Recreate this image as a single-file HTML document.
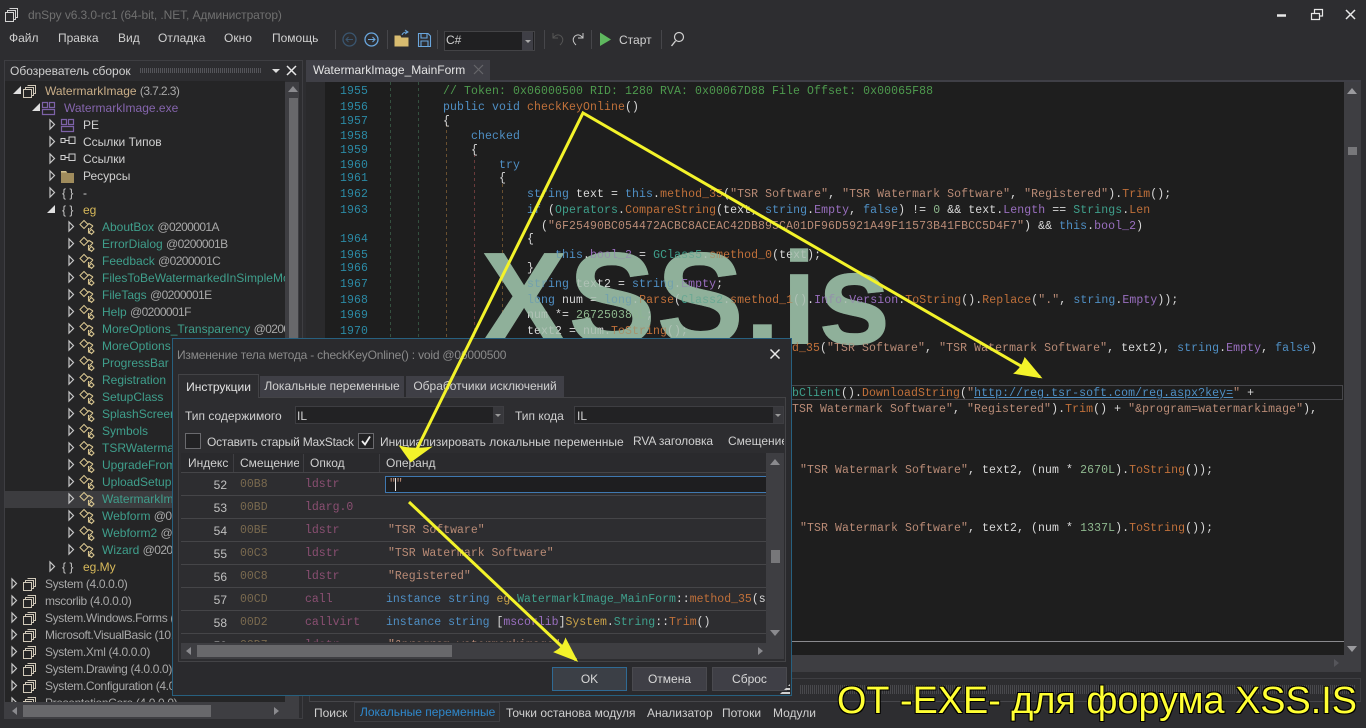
<!DOCTYPE html>
<html><head><meta charset="utf-8"><style>
html,body{margin:0;padding:0;width:1366px;height:728px;overflow:hidden;background:#2d2d30}
body{font-family:"Liberation Sans","Noto Sans CJK SC",sans-serif;font-size:12px;color:#d0d0d0;position:relative}
.a{position:absolute;white-space:nowrap}
.b{position:absolute}
#tree{position:absolute;left:5px;top:83px;width:280px;height:619px;overflow:hidden;background:#252526}
.r{position:relative;height:17px;line-height:17px;white-space:nowrap}
.r svg{position:absolute;left:0;top:0;width:110px;height:17px}
.r span{position:absolute;top:0}
.t{color:#3f9f8c}.g{color:#a8a8a8}
.r .g{letter-spacing:-.6px}
.r .l1.g{letter-spacing:-.35px}
.l1{left:40px}.l2{left:59px}.l3{left:78px}.l4{left:97px}
#code{position:absolute;left:0;top:2px;color:#d8d8d8}
#code div{position:absolute;white-space:pre;font-family:"Liberation Mono",monospace;font-size:11.5px;line-height:14px;letter-spacing:.1px}
.n{color:#2b8aa5}.k{color:#4f8fc4}.m{color:#c0703a}.s{color:#b98b76}.c{color:#4e9a4e}.y{color:#3fa08c}.d{color:#8fb98f}.u{color:#4f8fc4;text-decoration:underline}.p{color:#9a6fc0}
.row{position:absolute;left:181px;width:585px;height:22px;border-bottom:1px solid #454548;font-family:"Liberation Mono",monospace;font-size:11.5px;line-height:22px}
.row span{position:absolute;top:1px;white-space:pre}
.i{left:0;width:46px;text-align:right;color:#c0c0c0;font-family:"Liberation Sans",sans-serif;font-size:12px}
.o{left:59px;color:#7a6a4f}.q{left:124px;color:#8a4f72}.v{left:205px}
.btn{position:absolute;top:667px;height:22px;line-height:22px;text-align:center;background:#3f3f46;border:1px solid #4a4a4f;color:#d8d8d8;box-sizing:content-box}
.tab{position:absolute;top:376px;height:21px;line-height:21px;text-align:center;background:#3f3f46;color:#d0d0d0}
</style></head><body>
<svg width="0" height="0" style="position:absolute"><defs>
<g id="ao"><path d="M0 0L-8 8H0Z" fill="#e0e0e0"/></g>
<g id="ac"><path d="M0 0V9L4.500 4.500Z" fill="none" stroke="#c8c8c8" stroke-width="1.200"/></g>
<g id="asm"><path d="M4.500 .5H12.500V8.500H10M.5 4.500H8.500V12.500H.5ZM2.500 4.500V2.500H10.500V4.500M10.500 2.500V10.500H8.500" fill="none" stroke="#d0c8b8" stroke-width="1"/></g>
<g id="mod"><path d="M.5 .5H5.500V5.500H.5ZM7.500 .5H12.500V5.500H7.500ZM.5 7.500H12.500V12.500H.5Z" fill="none" stroke="#7d62a8" stroke-width="1.200"/></g>
<g id="ref"><path d="M0 2.500H4V6.500H0ZM8 1H14V7.500H8ZM4 4.500H8" fill="none" stroke="#d0d0d0" stroke-width="1"/></g>
<g id="fol"><path d="M0 1H5L6.500 3H13V13H0Z" fill="#a08c5c"/><path d="M0 1H5L6 2.500H0Z" fill="#d0c090"/></g>
<g id="cl"><path d="M0 4.500L4 .5L8 4.500L4 8.500ZM5.500 7L9 3.500L13 6M9.500 9.500L13 6M8.500 8V13L12 14M11.500 9.500L14 12L11.500 14.500L9 12Z" fill="none" stroke="#d6c38e" stroke-width="1.100"/></g>
</defs></svg>

<!-- title bar -->
<svg class="b" style="left:4px;top:8px" width="16" height="15"><path d="M5.500 .5H13.500V9.500H11M1.500 4.500H9.500V13.500H1.500ZM3.500 4.500V2.500H11.500V4.500M11.500 2.500V11.500H9.500" fill="none" stroke="#d4d4d4"/></svg>
<div class="a" style="left:28px;top:8px;color:#707070;font-size:12px;letter-spacing:-.09px">dnSpy v6.3.0-rc1 (64-bit, .NET, Администратор)</div>
<svg class="b" style="left:1270px;top:6px" width="92" height="16" fill="none" stroke="#e8e8e8"><path d="M7 9.500H16" stroke-width="2.500"/><path d="M41.500 7.500H49.500V13.500H41.500ZM44.500 7V3.500H52.500V10H50" stroke-width="1.200"/><path d="M76 4L85 13M85 4L76 13" stroke-width="1.500"/></svg>

<!-- menu -->
<div class="a" style="left:9px;top:31px">Файл</div>
<div class="a" style="left:58px;top:31px">Правка</div>
<div class="a" style="left:118px;top:31px">Вид</div>
<div class="a" style="left:158px;top:31px">Отладка</div>
<div class="a" style="left:224px;top:31px">Окно</div>
<div class="a" style="left:272px;top:31px">Помощь</div>
<svg class="b" style="left:330px;top:28px" width="360" height="24" fill="none">
<path d="M5.500 2V21M57.500 2V21M107.500 2V21M214.500 2V21M261.500 2V21M331.500 2V21" stroke="#46464a"/>
<circle cx="19.500" cy="11.500" r="6.500" stroke="#3a5670" stroke-width="1.300"/><path d="M23 11.500H16M18.500 9L16 11.500L18.500 14" stroke="#3a5670"/>
<circle cx="41.500" cy="11.500" r="6.500" stroke="#6aa7de" stroke-width="1.300"/><path d="M38 11.500H45M42.500 9L45 11.500L42.500 14" stroke="#6aa7de"/>
<path d="M65 8H70L71 10H78V18H65Z" fill="#d8bc70" stroke="#d8bc70"/><path d="M72 7Q73 4 77 4M75 2L78 4L75 6" stroke="#6aa7de"/>
<path d="M88.500 5.500H98L100.500 8V18.500H88.500ZM91 5.500V10H97V5.500M91 18.500V13H98V18.500" stroke="#6aa7de" stroke-width="1.100"/>
<path d="M223 5V10H228M223 10Q227 5 231 8Q235 12 230 17" stroke="#555"/>
<path d="M253 5V10H248M253 10Q249 5 245 8Q241 12 246 17" stroke="#c8c8c8"/>
<path d="M270 4.500L281 11.500L270 18Z" fill="#5fb85f"/>
<circle cx="349" cy="9" r="4.500" stroke="#d0d0d0" stroke-width="1.200"/><path d="M345.500 13L341.500 18" stroke="#d0d0d0" stroke-width="1.400"/>
</svg>
<div class="b" style="left:444px;top:31px;width:89px;height:18px;background:#202022;border:1px solid #434346"></div>
<div class="b" style="left:522px;top:32px;width:11px;height:18px;background:#3f3f46"></div>
<div class="b" style="left:525px;top:40px;border:3px solid transparent;border-top:3px solid #aaa"></div>
<div class="a" style="left:446px;top:33px">C#</div>
<div class="a" style="left:619px;top:33px">Старт</div>

<!-- assembly explorer -->
<div class="b" style="left:4px;top:60px;width:299px;height:659px;border:1px solid #3e3e42;box-sizing:border-box"></div>
<div class="a" style="left:10px;top:64px">Обозреватель сборок</div>
<div class="b" style="left:140px;top:68px;width:122px;height:5px;background:repeating-linear-gradient(90deg,#55555a 0 1px,transparent 1px 2px)"></div>
<div class="b" style="left:272px;top:69px;border:4px solid transparent;border-top:4px solid #ddd"></div>
<svg class="b" style="left:286px;top:65px" width="11" height="11"><path d="M1 1L10 10M10 1L1 10" stroke="#e8e8e8" stroke-width="1.500"/></svg>
<div class="b" style="left:5px;top:81px;width:280px;height:3px;background:#252526"></div>
<div id="tree">
<div class="r"><svg><use href="#ao" x="16" y="3"/><use href="#asm" x="18" y="2"/></svg><span class="l1"><span style="position:static;color:#c9ae88">WatermarkImage</span> <span style="position:static" class="g">(3.7.2.3)</span></span></div>
<div class="r"><svg><use href="#ao" x="35" y="3"/><use href="#mod" x="37" y="2"/></svg><span class="l2" style="color:#8565ad">WatermarkImage.exe</span></div>
<div class="r"><svg><use href="#ac" x="45" y="3"/><use href="#mod" x="56" y="2"/></svg><span class="l3">PE</span></div>
<div class="r"><svg><use href="#ac" x="45" y="3"/><use href="#ref" x="56" y="2"/></svg><span class="l3">Ссылки Типов</span></div>
<div class="r"><svg><use href="#ac" x="45" y="3"/><use href="#ref" x="56" y="2"/></svg><span class="l3">Ссылки</span></div>
<div class="r"><svg><use href="#ac" x="45" y="3"/><use href="#fol" x="56" y="2"/></svg><span class="l3">Ресурсы</span></div>
<div class="r"><svg><use href="#ac" x="45" y="3"/></svg><span style="left:57px;color:#c8c8c8">{ }</span><span class="l3">-</span></div>
<div class="r"><svg><use href="#ao" x="50" y="3"/></svg><span style="left:57px;color:#c8c8c8">{ }</span><span class="l3" style="color:#d7b95a">eg</span></div>
<div class="r"><svg><use href="#ac" x="64" y="3"/><use href="#cl" x="75" y="1"/></svg><span class="l4 t">AboutBox <span style="position:static" class="g">@0200001A</span></span></div>
<div class="r"><svg><use href="#ac" x="64" y="3"/><use href="#cl" x="75" y="1"/></svg><span class="l4 t">ErrorDialog <span style="position:static" class="g">@0200001B</span></span></div>
<div class="r"><svg><use href="#ac" x="64" y="3"/><use href="#cl" x="75" y="1"/></svg><span class="l4 t">Feedback <span style="position:static" class="g">@0200001C</span></span></div>
<div class="r"><svg><use href="#ac" x="64" y="3"/><use href="#cl" x="75" y="1"/></svg><span class="l4 t">FilesToBeWatermarkedInSimpleMode</span></div>
<div class="r"><svg><use href="#ac" x="64" y="3"/><use href="#cl" x="75" y="1"/></svg><span class="l4 t">FileTags <span style="position:static" class="g">@0200001E</span></span></div>
<div class="r"><svg><use href="#ac" x="64" y="3"/><use href="#cl" x="75" y="1"/></svg><span class="l4 t">Help <span style="position:static" class="g">@0200001F</span></span></div>
<div class="r"><svg><use href="#ac" x="64" y="3"/><use href="#cl" x="75" y="1"/></svg><span class="l4 t">MoreOptions_Transparency <span style="position:static" class="g">@02000020</span></span></div>
<div class="r"><svg><use href="#ac" x="64" y="3"/><use href="#cl" x="75" y="1"/></svg><span class="l4 t">MoreOptions</span></div>
<div class="r"><svg><use href="#ac" x="64" y="3"/><use href="#cl" x="75" y="1"/></svg><span class="l4 t">ProgressBar</span></div>
<div class="r"><svg><use href="#ac" x="64" y="3"/><use href="#cl" x="75" y="1"/></svg><span class="l4 t">Registration</span></div>
<div class="r"><svg><use href="#ac" x="64" y="3"/><use href="#cl" x="75" y="1"/></svg><span class="l4 t">SetupClass</span></div>
<div class="r"><svg><use href="#ac" x="64" y="3"/><use href="#cl" x="75" y="1"/></svg><span class="l4 t">SplashScreen</span></div>
<div class="r"><svg><use href="#ac" x="64" y="3"/><use href="#cl" x="75" y="1"/></svg><span class="l4 t">Symbols</span></div>
<div class="r"><svg><use href="#ac" x="64" y="3"/><use href="#cl" x="75" y="1"/></svg><span class="l4 t">TSRWatermark</span></div>
<div class="r"><svg><use href="#ac" x="64" y="3"/><use href="#cl" x="75" y="1"/></svg><span class="l4 t">UpgradeFrom</span></div>
<div class="r"><svg><use href="#ac" x="64" y="3"/><use href="#cl" x="75" y="1"/></svg><span class="l4 t">UploadSetup</span></div>
<div class="r" style="background:#3c3c3f"><svg><use href="#ac" x="64" y="3"/><use href="#cl" x="75" y="1"/></svg><span class="l4 t">WatermarkImage_MainForm</span></div>
<div class="r"><svg><use href="#ac" x="64" y="3"/><use href="#cl" x="75" y="1"/></svg><span class="l4 t">Webform <span style="position:static" class="g">@0200</span></span></div>
<div class="r"><svg><use href="#ac" x="64" y="3"/><use href="#cl" x="75" y="1"/></svg><span class="l4 t">Webform2 <span style="position:static" class="g">@0200</span></span></div>
<div class="r"><svg><use href="#ac" x="64" y="3"/><use href="#cl" x="75" y="1"/></svg><span class="l4 t">Wizard <span style="position:static" class="g">@0200</span></span></div>
<div class="r"><svg><use href="#ac" x="45" y="3"/></svg><span style="left:57px;color:#c8c8c8">{ }</span><span class="l3" style="color:#d7b95a">eg.My</span></div>
<div class="r"><svg><use href="#ac" x="7" y="3"/><use href="#asm" x="18" y="2"/></svg><span class="l1 g">System (4.0.0.0)</span></div>
<div class="r"><svg><use href="#ac" x="7" y="3"/><use href="#asm" x="18" y="2"/></svg><span class="l1 g">mscorlib (4.0.0.0)</span></div>
<div class="r"><svg><use href="#ac" x="7" y="3"/><use href="#asm" x="18" y="2"/></svg><span class="l1 g">System.Windows.Forms (4.0.0.0)</span></div>
<div class="r"><svg><use href="#ac" x="7" y="3"/><use href="#asm" x="18" y="2"/></svg><span class="l1 g">Microsoft.VisualBasic (10.0.0.0)</span></div>
<div class="r"><svg><use href="#ac" x="7" y="3"/><use href="#asm" x="18" y="2"/></svg><span class="l1 g">System.Xml (4.0.0.0)</span></div>
<div class="r"><svg><use href="#ac" x="7" y="3"/><use href="#asm" x="18" y="2"/></svg><span class="l1 g">System.Drawing (4.0.0.0)</span></div>
<div class="r"><svg><use href="#ac" x="7" y="3"/><use href="#asm" x="18" y="2"/></svg><span class="l1 g">System.Configuration (4.0.0.0)</span></div>
<div class="r"><svg><use href="#ac" x="7" y="3"/><use href="#asm" x="18" y="2"/></svg><span class="l1 g">PresentationCore (4.0.0.0)</span></div>
</div>
<div class="b" style="left:285px;top:82px;width:14px;height:636px;background:#3e3e42"></div>
<div class="b" style="left:289px;top:98px;width:9px;height:330px;background:#68686b"></div>
<div class="b" style="left:288px;top:86px;border:5px solid transparent;border-bottom:6px solid #8a8a8e;border-top:0"></div>
<div class="b" style="left:5px;top:702px;width:294px;height:16px;background:#3e3e42"></div>
<div class="b" style="left:23px;top:705px;width:188px;height:12px;background:#68686b"></div>
<div class="b" style="left:12px;top:707px;border:4px solid transparent;border-right:5px solid #8a8a8e;border-left:0"></div>
<div class="b" style="left:274px;top:707px;border:4px solid transparent;border-left:5px solid #8a8a8e;border-right:0"></div>

<!-- editor -->
<div class="b" style="left:306px;top:60px;width:184px;height:21px;background:#3f3f46"></div>
<div class="a" style="left:313px;top:63px;color:#e4e4e4">WatermarkImage_MainForm</div>
<svg class="b" style="left:473px;top:64px" width="11" height="11"><path d="M1 1L10 10M10 1L1 10" stroke="#66666a" stroke-width="1.200"/></svg>
<div class="b" style="left:306px;top:80px;width:1055px;height:2px;background:#3f3f46"></div>
<div class="b" style="left:306px;top:82px;width:1038px;height:573px;background:#1e1e1e"></div>
<div class="b" style="left:306px;top:82px;width:19px;height:573px;background:#2a2a2c"></div>
<div class="b" style="left:1344px;top:82px;width:17px;height:590px;background:#3e3e42"></div>
<div class="b" style="left:1347px;top:88px;border:5px solid transparent;border-bottom:6px solid #9a9a9e;border-top:0"></div>
<div class="b" style="left:1348px;top:147px;width:9px;height:8px;background:#77777a"></div>
<div class="b" style="left:1347px;top:646px;border:5px solid transparent;border-top:6px solid #9a9a9e;border-bottom:0"></div>
<div class="b" style="left:306px;top:655px;width:1055px;height:17px;background:#3e3e42"></div>
<div class="b" style="left:1334px;top:659px;border:4px solid transparent;border-left:5px solid #55555a;border-right:0"></div>
<div class="b" style="left:306px;top:641px;width:1038px;height:1px;background:#8a8a8e"></div>
<svg class="b" style="left:380px;top:82px" width="130" height="270" fill="none" stroke-dasharray="3 3"><path d="M10.500 0V270M38.500 0V270" stroke="#34503f"/><path d="M66.500 42V270" stroke="#6a5030"/><path d="M94.500 72V270" stroke="#6a3a3a"/><path d="M122.500 102V270" stroke="#6a5030"/></svg>
<div class="b" style="left:306px;top:385px;width:1037px;height:15px;border:1px solid #46464a;box-sizing:border-box"></div>

<!-- big watermark -->
<div class="a" style="left:480px;top:224px;font-size:132px;line-height:150px;font-weight:bold;color:#8fb09a">XSS.is</div>

<div id="code">
<div class="n" style="left:340px;top:83px">1955</div>
<div class="n" style="left:340px;top:99px">1956</div>
<div class="n" style="left:340px;top:113px">1957</div>
<div class="n" style="left:340px;top:128px">1958</div>
<div class="n" style="left:340px;top:142px">1959</div>
<div class="n" style="left:340px;top:157px">1960</div>
<div class="n" style="left:340px;top:170px">1961</div>
<div class="n" style="left:340px;top:186px">1962</div>
<div class="n" style="left:340px;top:202px">1963</div>
<div class="n" style="left:340px;top:231px">1964</div>
<div class="n" style="left:340px;top:247px">1965</div>
<div class="n" style="left:340px;top:260px">1966</div>
<div class="n" style="left:340px;top:276px">1967</div>
<div class="n" style="left:340px;top:292px">1968</div>
<div class="n" style="left:340px;top:307px">1969</div>
<div class="n" style="left:340px;top:323px">1970</div>
<div class="c" style="left:443px;top:83px">// Token: 0x06000500 RID: 1280 RVA: 0x00067D88 File Offset: 0x00065F88</div>
<div style="left:443px;top:99px"><span class="k">public void</span> <span class="m">checkKeyOnline</span>()</div>
<div style="left:443px;top:113px">{</div>
<div class="k" style="left:471px;top:128px">checked</div>
<div style="left:471px;top:142px">{</div>
<div class="k" style="left:499px;top:157px">try</div>
<div style="left:499px;top:170px">{</div>
<div style="left:527px;top:186px"><span class="k">string</span> text = <span class="k">this</span>.<span class="m">method_35</span>(<span class="s">"TSR Software"</span>, <span class="s">"TSR Watermark Software"</span>, <span class="s">"Registered"</span>).<span class="m">Trim</span>();</div>
<div style="left:527px;top:202px"><span class="k">if</span> (<span class="y">Operators</span>.<span class="m">CompareString</span>(text, <span class="k">string</span>.<span class="p">Empty</span>, <span class="k">false</span>) != <span class="d">0</span> &amp;&amp; text.<span class="p">Length</span> == <span class="y">Strings</span>.<span class="m">Len</span></div>
<div style="left:541px;top:218px">(<span class="s">"6F25490BC054472ACBC8ACEAC42DB895CA01DF96D5921A49F11573B41FBCC5D4F7"</span>) &amp;&amp; <span class="k">this</span>.<span class="p">bool_2</span>)</div>
<div style="left:527px;top:231px">{</div>
<div style="left:555px;top:247px"><span class="k">this</span>.<span class="p">bool_2</span> = <span class="y">GClass5</span>.<span class="m">smethod_0</span>(text);</div>
<div style="left:527px;top:260px">}</div>
<div style="left:527px;top:276px"><span class="k">string</span> text2 = <span class="k">string</span>.<span class="p">Empty</span>;</div>
<div style="left:527px;top:292px"><span class="k">long</span> num = <span class="k">long</span>.<span class="m">Parse</span>(<span class="y">Class2</span>.<span class="m">smethod_1</span>().<span class="p">Info</span>.<span class="p">Version</span>.<span class="m">ToString</span>().<span class="m">Replace</span>(<span class="s">"."</span>, <span class="k">string</span>.<span class="p">Empty</span>));</div>
<div style="left:527px;top:307px">num *= <span class="d">267250386L</span>;</div>
<div style="left:527px;top:323px">text2 = num.<span class="m">ToString</span>();</div>
<div style="left:792px;top:340px"><span class="m">d_35</span>(<span class="s">"TSR Software"</span>, <span class="s">"TSR Watermark Software"</span>, text2), <span class="k">string</span>.<span class="p">Empty</span>, <span class="k">false</span>)</div>
<div style="left:792px;top:385px"><span class="y">bClient</span>().<span class="m">DownloadString</span>(<span class="s">"</span><span class="u">http://reg.tsr-soft.com/reg.aspx?key=</span><span class="s">"</span> +</div>
<div style="left:792px;top:401px"><span class="s">TSR Watermark Software"</span>, <span class="s">"Registered"</span>).<span class="m">Trim</span>() + <span class="s">"&amp;program=watermarkimage"</span>),</div>
<div style="left:800px;top:462px"><span class="s">"TSR Watermark Software"</span>, text2, (num * <span class="d">2670L</span>).<span class="m">ToString</span>());</div>
<div style="left:800px;top:520px"><span class="s">"TSR Watermark Software"</span>, text2, (num * <span class="d">1337L</span>).<span class="m">ToString</span>());</div>
</div>
<!-- watermark veil so code shows dimly through -->
<div class="a" style="left:480px;top:224px;font-size:132px;line-height:150px;font-weight:bold;color:#8fb09a;opacity:.55">XSS.is</div>

<!-- bottom tool tabs -->
<div class="b" style="left:309px;top:678px;width:1052px;height:24px;border:1px solid #3e3e42;border-bottom-color:#46464a;box-sizing:border-box"></div>
<div class="b" style="left:800px;top:685px;width:555px;height:9px;background:repeating-linear-gradient(90deg,#48484c 0 1px,transparent 1px 2px)"></div>
<div class="b" style="left:354px;top:702px;width:146px;height:20px;background:#2d2d30;border:1px solid #3e3e42;box-sizing:border-box"></div>
<div class="a" style="left:314px;top:706px">Поиск</div>
<div class="a" style="left:360px;top:705px;color:#2f88cc">Локальные переменные</div>
<div class="a" style="left:506px;top:706px">Точки останова модуля</div>
<div class="a" style="left:647px;top:706px">Анализатор</div>
<div class="a" style="left:722px;top:706px">Потоки</div>
<div class="a" style="left:773px;top:706px">Модули</div>

<!-- dialog -->
<div class="b" style="left:172px;top:338px;width:620px;height:358px;background:#2a2a2d;border:1px solid #27607f;box-sizing:border-box"></div>
<div class="a" style="left:177px;top:348px;color:#8a8a8a;letter-spacing:-.2px">Изменение тела метода - checkKeyOnline() : void @06000500</div>
<svg class="b" style="left:769px;top:348px" width="12" height="12"><path d="M1.500 1.500L10.500 10.500M10.500 1.500L1.500 10.500" stroke="#e8e8e8" stroke-width="1.500"/></svg>
<div class="b" style="left:178px;top:397px;width:608px;height:265px;background:#2d2d30;border:1px solid #434346;box-sizing:border-box"></div>
<div class="tab" style="left:178px;top:374px;width:81px;height:24px;line-height:24px;background:#2d2d30;border:1px solid #434346;border-bottom:0;box-sizing:border-box;color:#e4e4e4">Инструкции</div>
<div class="tab" style="left:260px;width:144px">Локальные переменные</div>
<div class="tab" style="left:406px;width:158px">Обработчики исключений</div>
<div class="a" style="left:185px;top:409px">Тип содержимого</div>
<div class="b" style="left:295px;top:406px;width:209px;height:18px;background:#222224;border:1px solid #3e3e42;box-sizing:border-box"></div>
<div class="b" style="left:493px;top:407px;width:10px;height:16px;background:#38383c"></div>
<div class="b" style="left:495px;top:414px;border:3px solid transparent;border-top:3px solid #999"></div>
<div class="a" style="left:297px;top:409px">IL</div>
<div class="a" style="left:515px;top:409px">Тип кода</div>
<div class="b" style="left:574px;top:406px;width:210px;height:18px;background:#222224;border:1px solid #3e3e42;box-sizing:border-box"></div>
<div class="b" style="left:773px;top:407px;width:10px;height:16px;background:#38383c"></div>
<div class="b" style="left:775px;top:414px;border:3px solid transparent;border-top:3px solid #999"></div>
<div class="a" style="left:577px;top:409px">IL</div>
<div class="b" style="left:185px;top:433px;width:16px;height:16px;background:#222224;border:1px solid #6a6a6e;box-sizing:border-box"></div>
<div class="a" style="left:207px;top:435px;letter-spacing:-.2px">Оставить старый MaxStack</div>
<div class="b" style="left:358px;top:433px;width:16px;height:16px;background:#222224;border:1px solid #6a6a6e;box-sizing:border-box"></div>
<svg class="b" style="left:358px;top:433px" width="16" height="16"><path d="M4 8L7 11.500L12 3.500" fill="none" stroke="#f0f0f0" stroke-width="1.800"/></svg>
<div class="a" style="left:380px;top:435px">Инициализировать локальные переменные</div>
<div class="a" style="left:633px;top:434px;letter-spacing:-.1px">RVA заголовка</div>
<div class="a" style="left:728px;top:434px;width:56px;overflow:hidden">Смещение</div>

<!-- table -->
<div class="b" style="left:181px;top:453px;width:603px;height:190px;background:#2d2d30;overflow:hidden"></div>
<div class="b" style="left:181px;top:453px;width:585px;height:20px;background:#2a2a2d;border-bottom:1px solid #454548;box-sizing:border-box"></div>
<div class="b" style="left:233px;top:454px;width:1px;height:18px;background:#3e3e42"></div>
<div class="b" style="left:303px;top:454px;width:1px;height:18px;background:#3e3e42"></div>
<div class="b" style="left:379px;top:454px;width:1px;height:18px;background:#3e3e42"></div>
<div class="a" style="left:188px;top:456px">Индекс</div>
<div class="a" style="left:240px;top:456px;width:59px;overflow:hidden">Смещение</div>
<div class="a" style="left:310px;top:456px">Опкод</div>
<div class="a" style="left:386px;top:456px">Операнд</div>
<div id="rows" style="position:absolute;left:0;top:0;width:766px;height:642px;overflow:hidden">
<div class="row" style="top:473px"><span class="i">52</span><span class="o">00B8</span><span class="q">ldstr</span></div>
<div class="row" style="top:496px"><span class="i">53</span><span class="o">00BD</span><span class="q">ldarg.0</span></div>
<div class="row" style="top:519px"><span class="i">54</span><span class="o">00BE</span><span class="q">ldstr</span><span class="v s" style="left:207px">"TSR Software"</span></div>
<div class="row" style="top:542px"><span class="i">55</span><span class="o">00C3</span><span class="q">ldstr</span><span class="v s" style="left:207px">"TSR Watermark Software"</span></div>
<div class="row" style="top:565px"><span class="i">56</span><span class="o">00C8</span><span class="q">ldstr</span><span class="v s" style="left:207px">"Registered"</span></div>
<div class="row" style="top:588px"><span class="i">57</span><span class="o">00CD</span><span class="q">call</span><span class="v" style="color:#d8d8d8"><span class="k" style="position:static">instance string</span> <span class="y" style="position:static;color:#c9a24a">eg</span>.<span class="y" style="position:static">WatermarkImage_MainForm</span>::<span class="m" style="position:static">method_35</span>(string)</span></div>
<div class="row" style="top:611px"><span class="i">58</span><span class="o">00D2</span><span class="q">callvirt</span><span class="v" style="color:#d8d8d8"><span class="k" style="position:static">instance string</span> [<span class="p" style="position:static">mscorlib</span>]<span class="y" style="position:static;color:#c9a24a">System</span>.<span class="y" style="position:static">String</span>::<span class="m" style="position:static">Trim</span>()</span></div>
<div class="row" style="top:634px"><span class="i">59</span><span class="o">00D7</span><span class="q">ldstr</span><span class="v s" style="left:207px">"&amp;program=watermarkimage"</span></div>
</div>
<div class="b" style="left:385px;top:476px;width:381px;height:17px;background:#1e1e20;border:1px solid #3f78b0;border-right:0;box-sizing:border-box"></div>
<div class="a" style="left:389px;top:478px;font-family:'Liberation Mono',monospace;font-size:11.5px;color:#b98b76">""</div>
<div class="b" style="left:395px;top:478px;width:1px;height:13px;background:#e8e8e8"></div>
<div class="b" style="left:181px;top:643px;width:585px;height:16px;background:#3e3e42"></div>
<div class="b" style="left:197px;top:645px;width:255px;height:12px;background:#68686b"></div>
<div class="b" style="left:186px;top:647px;border:4px solid transparent;border-right:5px solid #8a8a8e;border-left:0"></div>
<div class="b" style="left:758px;top:647px;border:4px solid transparent;border-left:5px solid #8a8a8e;border-right:0"></div>
<div class="b" style="left:766px;top:453px;width:18px;height:206px;background:#3e3e42"></div>
<div class="b" style="left:770px;top:459px;border:5px solid transparent;border-bottom:6px solid #8a8a8e;border-top:0"></div>
<div class="b" style="left:771px;top:550px;width:9px;height:13px;background:#77777a"></div>
<div class="b" style="left:770px;top:630px;border:5px solid transparent;border-top:6px solid #8a8a8e;border-bottom:0"></div>
<div class="btn" style="left:552px;width:73px;border-color:#2f6a94;background:#3b3f46">OK</div>
<div class="btn" style="left:632px;width:73px">Отмена</div>
<div class="btn" style="left:712px;width:73px">Сброс</div>
<div class="b" style="left:780px;top:684px;width:10px;height:10px;background:repeating-linear-gradient(0deg,#d0d0d0 0 2px,transparent 2px 4px);clip-path:polygon(100% 0,100% 100%,0 100%)"></div>

<!-- yellow arrows -->
<svg class="b" style="left:0;top:0" width="1366" height="728" fill="none" stroke="#f3f32a" stroke-width="3">
<path d="M411 461L583 113L1040 377"/>
<path d="M409 502L576 660"/>
<path d="M411 461L401 447Q412 450 429 448Z" fill="#f3f32a" stroke-width="2"/>
<path d="M1040 377L1015.500 373Q1022 368 1025 359Z" fill="#f3f32a" stroke-width="2"/>
<path d="M576 660L555.500 652Q563 648 565.600 640Z" fill="#f3f32a" stroke-width="2"/>
</svg>

<!-- forum caption -->
<div class="a" style="left:837px;top:679px;font-size:37.800px;line-height:44px;color:#ffff33;text-shadow:-1px -1px 0 #000,1px -1px 0 #000,-1px 1px 0 #000,1px 1px 0 #000">ОТ -EXE- для форума XSS.IS</div>
</body></html>
